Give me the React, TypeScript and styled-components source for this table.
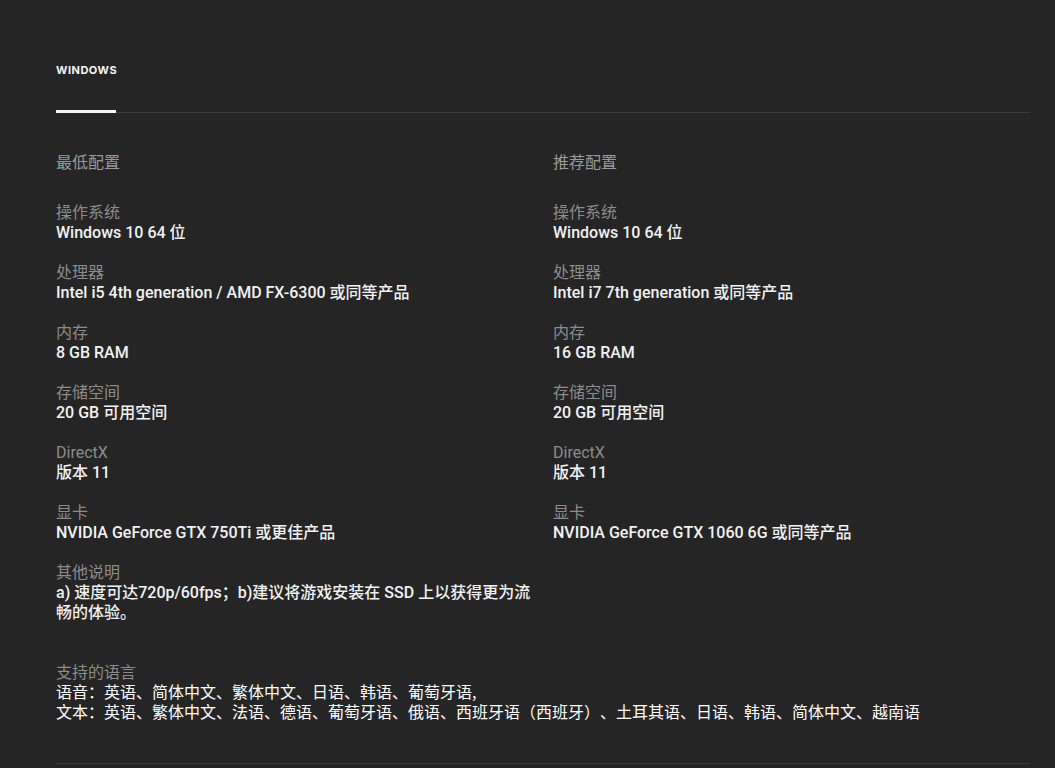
import styled, { createGlobalStyle } from "styled-components";

const GlobalStyle = createGlobalStyle`
  html, body {
    margin: 0;
    background: #252525;
  }
  body {
    font-family: Roboto, "Noto Sans CJK SC", sans-serif;
    -webkit-font-smoothing: antialiased;
  }
`;

const Page = styled.div`
  padding: 61px 25px 0 56px;
  min-height: 768px;
  box-sizing: border-box;
`;

const Tabs = styled.div`
  display: flex;
  border-bottom: 1px solid #3b3b3b;
`;

const Tab = styled.div`
  font-family: Inter, sans-serif;
  font-size: 11px;
  font-weight: 700;
  letter-spacing: 0.5px;
  color: #f5f5f5;
  text-transform: uppercase;
  line-height: 18px;
  padding-bottom: 34px;
  width: 60px;
  box-shadow: inset 0 -3px 0 #f5f5f5;
  margin-bottom: -1px;
`;

const Columns = styled.div`
  display: grid;
  grid-template-columns: 1fr 1fr;
  column-gap: 20px;
  padding-top: 40px;
`;

const Column = styled.div`
  display: flex;
  flex-direction: column;
  gap: 20px;
`;

const Heading = styled.div`
  font-size: 16px;
  line-height: 20px;
  color: #9a9a9a;
  margin-bottom: 10px;
`;

const Item = styled.div`
  font-size: 16px;
  line-height: 20px;
`;

const Label = styled.div`
  color: #8c8c8c;
`;

const Value = styled.div`
  color: #f2f2f2;
  font-weight: 500;
`;

const Languages = styled.div`
  margin-top: 38px;
  padding-bottom: 42px;
  border-bottom: 1px solid #3b3b3b;
  font-family: "Noto Sans CJK SC", sans-serif;
  font-size: 16px;
  line-height: 20px;
  text-spacing-trim: space-all;
`;

const LangLabel = styled.div`
  color: #8c8c8c;
`;

const LangLine = styled.div`
  color: #ffffff;
`;

type Spec = { label: string; value: string };

const minimum: Spec[] = [
  { label: "操作系统", value: "Windows 10 64 位" },
  { label: "处理器", value: "Intel i5 4th generation / AMD FX-6300 或同等产品" },
  { label: "内存", value: "8 GB RAM" },
  { label: "存储空间", value: "20 GB 可用空间" },
  { label: "DirectX", value: "版本 11" },
  { label: "显卡", value: "NVIDIA GeForce GTX 750Ti 或更佳产品" },
  {
    label: "其他说明",
    value: "a) 速度可达720p/60fps；b)建议将游戏安装在 SSD 上以获得更为流畅的体验。",
  },
];

const recommended: Spec[] = [
  { label: "操作系统", value: "Windows 10 64 位" },
  { label: "处理器", value: "Intel i7 7th generation 或同等产品" },
  { label: "内存", value: "16 GB RAM" },
  { label: "存储空间", value: "20 GB 可用空间" },
  { label: "DirectX", value: "版本 11" },
  { label: "显卡", value: "NVIDIA GeForce GTX 1060 6G 或同等产品" },
];

function SpecColumn({ title, specs }: { title: string; specs: Spec[] }) {
  return (
    <Column>
      <Heading>{title}</Heading>
      {specs.map((s) => (
        <Item key={s.label}>
          <Label>{s.label}</Label>
          <Value>{s.value}</Value>
        </Item>
      ))}
    </Column>
  );
}

export default function App() {
  return (
    <>
      <GlobalStyle />
      <Page>
        <Tabs>
          <Tab>Windows</Tab>
        </Tabs>
        <Columns>
          <SpecColumn title="最低配置" specs={minimum} />
          <SpecColumn title="推荐配置" specs={recommended} />
        </Columns>
        <Languages>
          <LangLabel>支持的语言</LangLabel>
          <LangLine>语音：英语、简体中文、繁体中文、日语、韩语、葡萄牙语,</LangLine>
          <LangLine>
            文本：英语、繁体中文、法语、德语、葡萄牙语、俄语、西班牙语（西班牙）、土耳其语、日语、韩语、简体中文、越南语
          </LangLine>
        </Languages>
      </Page>
    </>
  );
}
